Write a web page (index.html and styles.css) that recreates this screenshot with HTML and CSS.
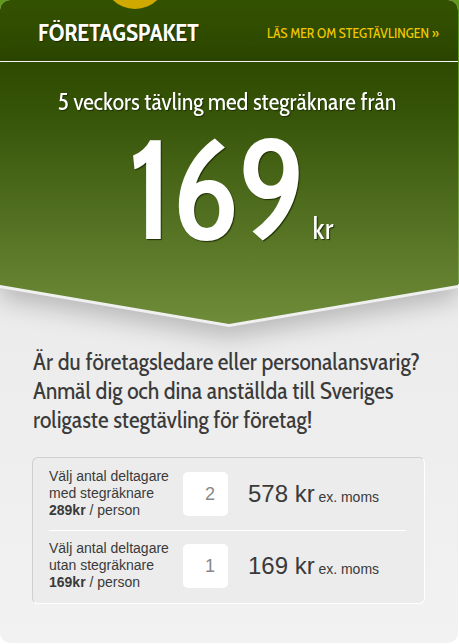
FILE: index.html
```html
<!DOCTYPE html>
<html lang="sv">
<head>
<meta charset="utf-8">
<title>Företagspaket</title>
<meta name="viewport" content="width=device-width, initial-scale=1">
<link rel="stylesheet" href="styles.css">
</head>
<body>
<main class="card">
  <header class="card-header">
    <span class="badge"></span>
    <h1 class="title">FÖRETAGSPAKET</h1>
    <a class="more" href="#">LÄS MER OM STEGTÄVLINGEN »</a>
  </header>
  <div class="ribbon">
    <div class="ribbon-edge">
      <section class="offer">
        <p class="lead">5 veckors tävling med stegräknare från</p>
        <p class="price"><span class="amount">169</span><span class="currency">kr</span></p>
      </section>
    </div>
  </div>
  <section class="signup">
    <p class="pitch">Är du företagsledare eller personalansvarig?<br>Anmäl dig och dina anställda till Sveriges<br>roligaste stegtävling för företag!</p>
    <form class="order">
      <div class="row">
        <label class="label" for="with">Välj antal deltagare<br>med stegräknare<br><b>289kr</b> / person</label>
        <input class="count" id="with" type="text" inputmode="numeric" value="2">
        <output class="sum" for="with">578 kr <small class="vat">ex. moms</small></output>
      </div>
      <div class="row">
        <label class="label" for="without">Välj antal deltagare<br>utan stegräknare<br><b>169kr</b> / person</label>
        <input class="count" id="without" type="text" inputmode="numeric" value="1">
        <output class="sum" for="without">169 kr <small class="vat">ex. moms</small></output>
      </div>
    </form>
  </section>
</main>
</body>
</html>
```
FILE: styles.css
```css
* {
  box-sizing: border-box;
}

body {
  margin: 0;
  background: linear-gradient(#5f9a1c 0, #7da04d 284px, #ffffff 284px) no-repeat;
  font-family: "Liberation Sans", Arial, sans-serif;
  color: #3a3a3a;
}

h1,
p {
  margin: 0;
}

.card {
  margin-right: 1px;
  border-radius: 10px;
  overflow: hidden;
  background: linear-gradient(#ebebeb 284px, #f2f2f2);
}

.card-header,
.lead,
.price,
.pitch {
  font-family: "Cabin Condensed", "Liberation Sans Narrow", "Open Sans", sans-serif;
}

.card-header {
  position: relative;
  display: flex;
  align-items: center;
  justify-content: space-between;
  height: 62px;
  padding: 4px 19px 0 38px;
  border-bottom: 1px solid #ffffff;
  background: linear-gradient(#335200, #2c4600);
}

.badge {
  position: absolute;
  top: -55px;
  left: 103px;
  width: 64px;
  height: 64px;
  border-radius: 50%;
  background: #cfa800;
}

.title {
  font-size: 24px;
  line-height: 30px;
  color: #ffffff;
  text-shadow: 1px 1px 1px #1a2a00;
}

.more {
  font-size: 14px;
  line-height: 20px;
  color: #f2c800;
  text-decoration: none;
}

.ribbon {
  margin-bottom: -3px;
  filter: drop-shadow(0 10px 12px rgba(0, 0, 0, 0.22));
}

.ribbon-edge {
  padding-bottom: 3px;
  background: #f0f0f0;
  clip-path: polygon(0 0, 100% 0, 100% calc(100% - 39px), 50% 100%, 0 calc(100% - 39px));
}

.offer {
  height: 262px;
  padding: 24px 4px 0 0;
  background: linear-gradient(#2e4a00, #365408 50px, #6f8c3a);
  clip-path: polygon(0 0, 100% 0, 100% calc(100% - 39px), 50% 100%, 0 calc(100% - 39px));
  color: #ffffff;
  text-align: center;
  text-shadow: 1px 1px 1px #1e3000;
}

.lead {
  font-size: 24px;
  line-height: 32px;
}

.price {
  display: flex;
  align-items: baseline;
  justify-content: center;
  gap: 7px;
  padding: 19px 0 0 8px;
}

.amount {
  font-size: 140px;
  line-height: 104px;
  font-weight: 500;
}

.currency {
  font-size: 30px;
  line-height: 32px;
}

.signup {
  padding: 23px 33px 39px 32px;
}

.pitch {
  font-size: 24px;
  line-height: 29px;
  white-space: nowrap;
  padding-left: 1px;
}

.order {
  margin-top: 23px;
  padding: 0 18px 2px 16px;
  border: 1px solid;
  border-color: #cfcfcf #ffffff #ffffff #cfcfcf;
  border-radius: 6px;
  background: #ececec;
}

.row {
  display: grid;
  grid-template-columns: 134px 45px 1fr;
  align-items: center;
  height: 73px;
  border-bottom: 1px solid #ffffff;
}

.row:last-child {
  height: 70px;
  border-bottom: 0;
}

.label {
  padding-bottom: 2px;
  font-size: 14px;
  line-height: 17px;
}

.count {
  width: 45px;
  height: 44px;
  padding: 0 13px 0 0;
  border: 0;
  border-radius: 5px;
  background: #ffffff;
  color: #888888;
  font: 18px "Liberation Sans", Arial, sans-serif;
  text-align: right;
}

.sum {
  padding: 2px 0 0 20px;
  font-size: 24px;
  line-height: 28px;
  white-space: nowrap;
}

.vat {
  margin-left: -3px;
  font-size: 14px;
}
```
